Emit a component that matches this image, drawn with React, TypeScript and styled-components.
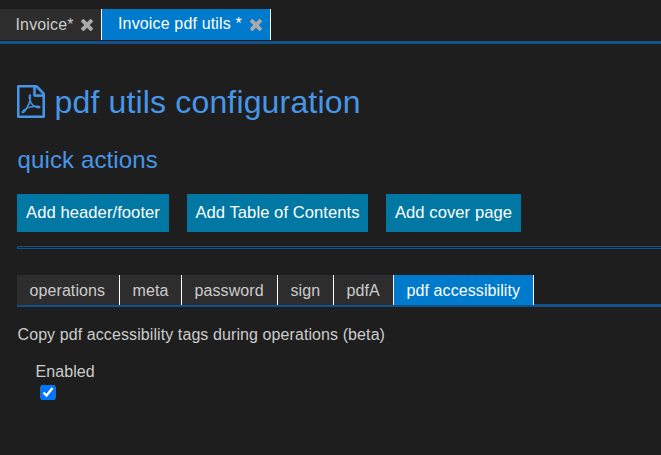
import React from "react";
import styled, { createGlobalStyle } from "styled-components";

const GlobalStyle = createGlobalStyle`
  * { box-sizing: border-box; }
  html, body { margin: 0; background: #1e1e1e; overflow: hidden; }
  body {
    color: #ccc;
    font: 16px/18px "Liberation Sans", Arial, sans-serif;
    letter-spacing: 0.09px;
  }
`;

const Page = styled.div`
  height: 455px;
  padding-top: 9px;
  overflow: hidden;
  white-space: nowrap;
`;

const FileTabs = styled.nav`
  display: flex;
  height: 35px;
  border-bottom: 3px solid #12518b;
`;

const FileTab = styled.div<{ $active?: boolean }>`
  display: flex;
  width: ${(p) => (p.$active ? 169 : 102)}px;
  height: 31px;
  padding: ${(p) => (p.$active ? "6px 0 0 16px" : "7px 0 0 15.5px")};
  border-right: 1px solid #fff;
  background: ${(p) => (p.$active ? "#007acc" : "#2d2d2d")};
  color: ${(p) => (p.$active ? "#fff" : "#ccc")};
  letter-spacing: 0.15px;
`;

const FileLabel = styled.span<{ $width: number }>`
  width: ${(p) => p.$width}px;
`;

const CloseIcon = styled.svg<{ $raised?: boolean }>`
  width: 12px;
  height: 12px;
  margin-top: ${(p) => (p.$raised ? 4 : 3)}px;
  fill: #aaa;
`;

const Main = styled.main`
  padding: 41px 0 0 17px;
`;

const Title = styled.h1`
  display: flex;
  margin: 0;
  height: 36px;
  color: #4796e8;
  font-size: 32px;
  font-weight: 400;
  line-height: 34px;
  letter-spacing: 0.16px;
`;

const PdfIcon = styled.svg`
  width: 28px;
  height: 33px;
  margin-right: 9.5px;
  fill: currentColor;
  stroke: currentColor;
  stroke-width: 22px;
`;

const Subtitle = styled.h2`
  margin: 25px 0 20px 0.5px;
  color: #4796e8;
  font-size: 24px;
  font-weight: 400;
  line-height: 28px;
  letter-spacing: 0.12px;
`;

const Actions = styled.div`
  display: flex;
  gap: 18px;
`;

const ActionButton = styled.button<{ $width: number }>`
  width: ${(p) => p.$width}px;
  height: 38px;
  padding: 0;
  border: 0;
  background: #0078a3;
  color: #fff;
  font: inherit;
  font-size: 16.6px;
  letter-spacing: 0.06px;
`;

const Divider = styled.div`
  height: 3px;
  margin: 14px 0 26px;
  border: 1px solid #12518b;
  border-right: 0;
`;

const SectionTabs = styled.nav`
  display: flex;
  height: 32px;
`;

const SectionTab = styled.div<{ $width: number; $active?: boolean }>`
  width: ${(p) => p.$width}px;
  height: 32px;
  padding: 7px 0 0 12.5px;
  border-bottom: 2px solid #12518b;
  background: ${(p) => (p.$active ? "#007acc" : "#2d2d2d")};
  background-clip: padding-box;
  box-shadow: inset -1px 0 0 #fff;
  color: ${(p) => (p.$active ? "#fff" : "#ccc")};
`;

const TabLineEnd = styled.div`
  flex: 1;
  border-bottom: 3px solid #12518b;
`;

const Description = styled.p`
  margin: 19px 0 19px 0.5px;
`;

const Option = styled.label`
  display: flex;
  flex-direction: column;
  width: 100px;
  margin-left: 18.5px;
`;

const Checkbox = styled.input`
  width: 16px;
  height: 15px;
  margin: 4px 0 0 4.5px;
`;

const sections = [
  { label: "operations", width: 103 },
  { label: "meta", width: 62 },
  { label: "password", width: 96 },
  { label: "sign", width: 56 },
  { label: "pdfA", width: 60 },
  { label: "pdf accessibility", width: 140, active: true },
];

const Close = ({ raised }: { raised?: boolean }) => (
  <CloseIcon $raised={raised} viewBox="110 366 1188 1188" aria-hidden="true">
    <path d="M1298 1322q0 40-28 68l-136 136q-28 28-68 28t-68-28l-294-294-294 294q-28 28-68 28t-68-28l-136-136q-28-28-28-68t28-68l294-294-294-294q-28-28-28-68t28-68l136-136q28-28 68-28t68 28l294 294 294-294q28-28 68-28t68 28l136 136q28 28 28 68t-28 68l-294 294 294 294q28 28 28 68z" />
  </CloseIcon>
);

export default function App() {
  return (
    <>
      <GlobalStyle />
      <Page>
        <FileTabs>
          <FileTab>
            <FileLabel $width={65.5}>Invoice*</FileLabel>
            <Close />
          </FileTab>
          <FileTab $active>
            <FileLabel $width={132}>Invoice pdf utils *</FileLabel>
            <Close raised />
          </FileTab>
        </FileTabs>
        <Main>
          <Title>
            <PdfIcon viewBox="128 0 1536 1792" preserveAspectRatio="none" aria-hidden="true">
              <path d="M1596 380q28 28 48 76t20 88v1152q0 40-28 68t-68 28h-1344q-40 0-68-28t-28-68v-1600q0-40 28-68t68-28h896q40 0 88 20t76 48zm-444-244v376h376q-10-29-22-41l-313-313q-12-12-41-22zm384 1528v-1024h-416q-40 0-68-28t-28-68v-416h-768v1536h1280zm-514-593q33 26 84 56 59-7 117-7 147 0 177 49 16 22 2 52 0 1-1 2l-2 2v1q-6 38-71 38-48 0-115-20t-130-53q-221 24-392 83-153 262-242 262-15 0-28-7l-24-12q-1-1-6-5-10-10-6-36 9-40 56-91.5t132-96.5q14-9 23 6 2 2 2 4 52-85 107-197 68-136 104-262-24-82-30.5-159.5t6.500-127.500q11-40 42-40h22q23 0 35 15 18 21 9 68-2 6-4 8 1 3 1 8v30q-2 123-14 192 55 164 146 238zm-576 411q52-24 137-158-51 40-87.500 84t-49.500 74zm398-920q-15 42-2 132 1-7 7-44 0-3 7-43 1-4 4-8-1-1-1-2-1-2-1-3-1-22-13-36 0 1-1 2v2zm-124 661q135-54 284-81-2-1-13-9.500t-16-13.500q-76-67-127-176-27 86-83 197-30 56-45 83zm646-16q-24-24-140-24 76 28 124 28 14 0 18-1 0-1-2-3z" />
            </PdfIcon>
            pdf utils configuration
          </Title>
          <Subtitle>quick actions</Subtitle>
          <Actions>
            <ActionButton $width={152}>Add header/footer</ActionButton>
            <ActionButton $width={181}>Add Table of Contents</ActionButton>
            <ActionButton $width={135}>Add cover page</ActionButton>
          </Actions>
          <Divider />
          <SectionTabs>
            {sections.map((s) => (
              <SectionTab key={s.label} $width={s.width} $active={s.active}>
                {s.label}
              </SectionTab>
            ))}
            <TabLineEnd />
          </SectionTabs>
          <Description>Copy pdf accessibility tags during operations (beta)</Description>
          <Option>
            Enabled
            <Checkbox type="checkbox" defaultChecked />
          </Option>
        </Main>
      </Page>
    </>
  );
}
